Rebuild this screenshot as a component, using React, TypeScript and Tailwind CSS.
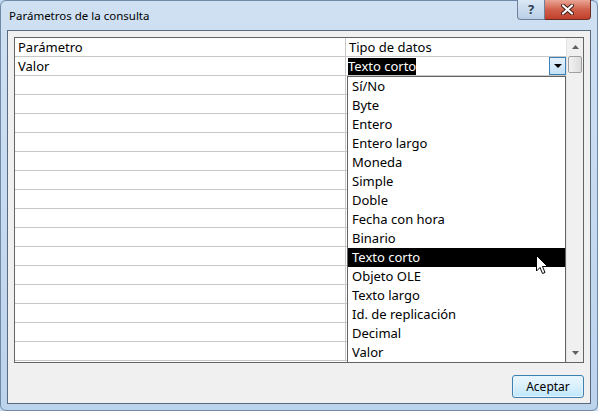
import React from 'react'

const TYPES = [
  'Sí/No',
  'Byte',
  'Entero',
  'Entero largo',
  'Moneda',
  'Simple',
  'Doble',
  'Fecha con hora',
  'Binario',
  'Texto corto',
  'Objeto OLE',
  'Texto largo',
  'Id. de replicación',
  'Decimal',
  'Valor',
]

const font = { fontFamily: '"Segoe UI", "Noto Sans", sans-serif' }

function Cursor() {
  return (
    <svg className="absolute left-[536px] top-[255px]" width="13" height="20" viewBox="0 0 13 20">
      <path d="M0.5 0.5 L0.5 16 L4 12.5 L6.5 18.5 L9 17.5 L6.5 11.5 L11.5 11.5 Z" fill="#fff" stroke="#000" strokeWidth="1" strokeLinejoin="round" />
    </svg>
  )
}

function Scrollbar() {
  return (
    <div className="w-[17px] shrink-0 border-l border-[#e3e3e3] bg-[#f0f0f0] flex flex-col">
      <div className="h-[18px] flex items-center justify-center">
        <svg width="7" height="4" viewBox="0 0 7 4"><path d="M0 4 L3.5 0 L7 4 Z" fill="#606060" /></svg>
      </div>
      <div className="mx-[1px] h-[17px] rounded-[2px] border border-[#a0a0a0] bg-gradient-to-r from-[#f2f2f2] to-[#dcdcdc]" />
      <div className="flex-1" />
      <div className="h-[18px] flex items-center justify-center">
        <svg width="7" height="4" viewBox="0 0 7 4"><path d="M0 0 L3.5 4 L7 0 Z" fill="#606060" /></svg>
      </div>
    </div>
  )
}

function Grid() {
  const rows = Array.from({ length: 15 })
  return (
    <div className="relative h-[326px] border border-[#646464] bg-white flex overflow-hidden text-[13px]">
      <div className="flex-1 flex flex-col">
        <div className="h-[19px] shrink-0 flex border-b border-[#c8c8c8]">
          <div className="w-[331px] shrink-0 border-r border-[#c8c8c8] pl-[3px] leading-[19px]">Parámetro</div>
          <div className="flex-1 pl-[3px] leading-[19px]">Tipo de datos</div>
        </div>
        <div className="h-[19px] shrink-0 flex border-b border-[#c8c8c8]">
          <div className="w-[331px] shrink-0 border-r border-[#c8c8c8] pl-[3px] leading-[19px]">Valor</div>
          <div className="flex-1 flex items-center pl-[2px] relative">
            <span className="bg-black text-white leading-[17px] h-[17px]">Texto corto</span>
            <div className="absolute right-0 top-0 w-[17px] h-[18px] border border-[#3c7fb1] bg-gradient-to-b from-[#e5f2fc] to-[#c4e0f6] flex items-center justify-center">
              <svg width="8" height="4" viewBox="0 0 8 4"><path d="M0 0 L4 4 L8 0 Z" fill="#000" /></svg>
            </div>
          </div>
        </div>
        {rows.map((_, i) => (
          <div key={i} className="h-[19px] shrink-0 flex border-b border-[#c8c8c8]">
            <div className="w-[331px] shrink-0 border-r border-[#c8c8c8]" />
            <div className="flex-1" />
          </div>
        ))}
      </div>
      <Scrollbar />
      <div className="absolute left-[332px] top-[38px] w-[219px] bottom-[-1px] border border-[#646464] bg-white flex flex-col">
        {TYPES.map((t, i) => (
          <div
            key={t + i}
            className={
              'h-[19px] shrink-0 pl-[4px] leading-[19px] ' + (i === 9 ? 'bg-black text-white' : '')
            }
          >
            {t}
          </div>
        ))}
      </div>
    </div>
  )
}

export default function App() {
  return (
    <div className="relative w-[598px] h-[411px] overflow-hidden text-[12px] text-black bg-[#c2d8ee]" style={font}>
      {/* glass frame */}
      <div className="absolute inset-0 rounded-[6px] border border-[#6f8aa8] bg-gradient-to-b from-[#cfe0f2] via-[#c6daf0] to-[#bcd3ec]" />
      <div className="relative flex flex-col h-full px-[7px] pb-[7px]">
        <div className="h-[30px] shrink-0 flex items-start">
          <div className="pt-[7px] pl-[2px] flex-1 text-[11.5px]">Parámetros de la consulta</div>
          <div className="flex">
            <div className="w-[28px] h-[20px] border border-[#6e8199] border-t-0 rounded-bl-[4px] bg-gradient-to-b from-[#dbe8f5] to-[#b9cee6] flex items-center justify-center text-[13px] font-bold text-[#2c3e55]">?</div>
            <div className="w-[46px] h-[20px] border border-[#6a2b22] border-t-0 border-l-0 rounded-br-[4px] bg-gradient-to-b from-[#e9a595] via-[#d0604b] to-[#c1402c] flex items-center justify-center">
              <svg width="13" height="11" viewBox="0 0 13 11">
                <path d="M2 1.5 L11 9.5 M11 1.5 L2 9.5" stroke="#3a1a14" strokeWidth="4" strokeLinecap="round" />
                <path d="M2 1.5 L11 9.5 M11 1.5 L2 9.5" stroke="#fff" strokeWidth="2.2" strokeLinecap="round" />
              </svg>
            </div>
          </div>
        </div>
        <div className="flex-1 border border-[#5a6a7c] bg-[#f0f0f0] px-[6px] pt-[6px] flex flex-col">
          <Grid />
          <div className="flex justify-end pt-[12px]">
            <div className="w-[72px] h-[23px] rounded-[3px] border border-[#3c7fb1] bg-gradient-to-b from-[#eaf6fd] via-[#d9f0fc] to-[#bee6fd] flex items-center justify-center shadow-[inset_0_0_0_1px_#e8f4fc]">
              Aceptar
            </div>
          </div>
        </div>
      </div>
      <Cursor />
    </div>
  )
}
